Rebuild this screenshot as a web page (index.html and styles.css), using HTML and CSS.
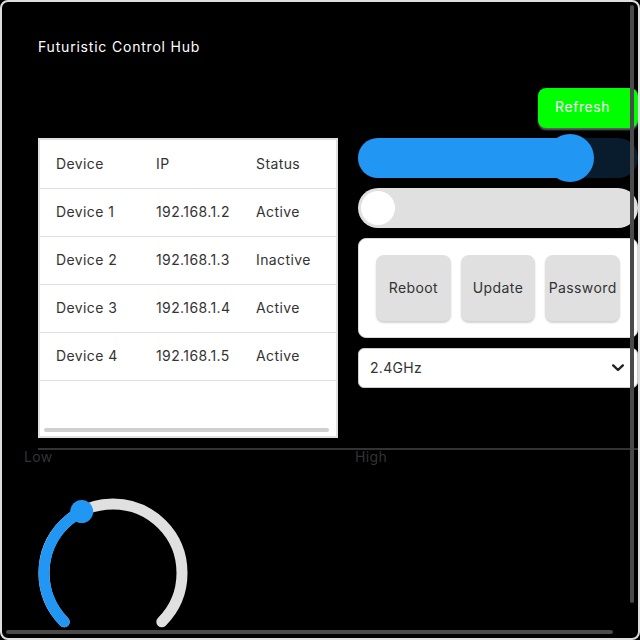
FILE: index.html
```html
<!DOCTYPE html>
<html>
<head>
<meta charset="utf-8">
<link rel="stylesheet" href="styles.css">
</head>
<body>
<div class="hub">
  <h1 class="title">Futuristic Control Hub</h1>
  <div class="toolbar">
    <button class="refresh">Refresh</button>
  </div>
  <div class="main">
    <div class="table-wrap">
      <table class="devices">
        <thead>
          <tr><th>Device</th><th>IP</th><th>Status</th></tr>
        </thead>
        <tbody>
          <tr><td>Device 1</td><td>192.168.1.2</td><td>Active</td></tr>
          <tr><td>Device 2</td><td>192.168.1.3</td><td>Inactive</td></tr>
          <tr><td>Device 3</td><td>192.168.1.4</td><td>Active</td></tr>
          <tr><td>Device 4</td><td>192.168.1.5</td><td>Active</td></tr>
        </tbody>
      </table>
      <div class="table-thumb"></div>
    </div>
    <div class="controls">
      <div class="slider">
        <div class="slider-fill" style="width:212px"></div>
        <div class="slider-thumb"></div>
      </div>
      <div class="toggle">
        <div class="toggle-knob"></div>
      </div>
      <div class="actions">
        <button class="action">Reboot</button>
        <button class="action">Update</button>
        <button class="action">Password</button>
      </div>
      <div class="select">
        <span>2.4GHz</span>
        <svg class="chevron" width="12" height="8" viewBox="0 0 12 8"><path d="M1.2 1.4 L6 6 L10.8 1.4" fill="none" stroke="#222" stroke-width="2.4" stroke-linecap="round" stroke-linejoin="round"/></svg>
      </div>
    </div>
  </div>
  <div class="range">
    <div class="range-line"></div>
    <div class="range-labels"><span>Low</span><span>High</span></div>
  </div>
  <svg class="knob" width="150" height="150" viewBox="0 0 150 150">
    <path d="M26.2 123.8 A69 69 0 1 1 123.8 123.8" fill="none" stroke="#e0e0e0" stroke-width="11" stroke-linecap="round"/>
    <path d="M26.2 123.8 A69 69 0 0 1 43.7 13.5" fill="none" stroke="#2196f3" stroke-width="11" stroke-linecap="round"/>
    <circle cx="43.7" cy="13.5" r="11.5" fill="#2196f3"/>
  </svg>
  <div class="vscroll"></div>
  <div class="hscroll"></div>
</div>
</body>
</html>
```
FILE: styles.css
```css
* { box-sizing: border-box; }
html, body { margin: 0; padding: 0; background: #000; }
body { font-family: Inter, "Noto Sans", sans-serif; font-size: 14px; }
.hub {
  position: relative;
  width: 640px;
  height: 640px;
  border: 2px solid #dedede;
  border-radius: 8px;
  background: #000;
  overflow: hidden;
  padding: 36px 0 0 36px;
}
.title {
  margin: 0;
  font-size: 14px;
  font-weight: 400;
  line-height: 17px;
  color: #fff;
  letter-spacing: 0.8px;
}
.toolbar {
  width: 600px;
  display: flex;
  justify-content: flex-end;
  margin-top: 33px;
}
.refresh {
  width: 100px;
  height: 40px;
  border: none;
  border-radius: 8px;
  background: #00ff00;
  color: #fff;
  font: inherit;
  letter-spacing: 0.6px;
  text-align: left;
  padding: 0 0 4px 17px;
  box-shadow: 0 2px 2px rgba(140, 140, 140, 0.7);
}
.main {
  display: grid;
  grid-template-columns: 300px 280px;
  gap: 20px;
  margin-top: 10px;
}
.table-wrap {
  position: relative;
  height: 300px;
  border: 2px solid #e0e0e0;
  background: #fff;
  overflow: hidden;
}
.devices {
  border-collapse: collapse;
  width: 307px;
  table-layout: fixed;
  color: #333;
}
.devices th, .devices td {
  text-align: left;
  font-weight: 400;
  height: 48px;
  padding: 0 0 1px 16px;
  border-bottom: 1px solid #e0e0e0;
  letter-spacing: 0.4px;
  white-space: nowrap;
}
.devices th:nth-child(1), .devices td:nth-child(1) { width: 100px; }
.devices th:nth-child(2), .devices td:nth-child(2) { width: 100px; }
.table-thumb {
  position: absolute;
  left: 4px;
  top: 288px;
  width: 285px;
  height: 4px;
  border-radius: 2px;
  background: #cfcfcf;
}
.controls {
  display: flex;
  flex-direction: column;
  gap: 10px;
}
.slider {
  height: 40px;
  border-radius: 20px;
  background: #081c2e;
  display: flex;
  align-items: center;
}
.slider-fill {
  height: 40px;
  background: #2196f3;
  border-radius: 20px 0 0 20px;
}
.slider-thumb {
  width: 48px;
  height: 48px;
  margin-left: -24px;
  border-radius: 50%;
  background: #2196f3;
  flex: none;
}
.toggle {
  height: 40px;
  border-radius: 20px;
  background: #e0e0e0;
  display: flex;
  align-items: center;
  padding-left: 3px;
}
.toggle-knob {
  width: 34px;
  height: 34px;
  border-radius: 50%;
  background: #fff;
}
.actions {
  height: 100px;
  background: #fff;
  border: 1px solid #d8d8d8;
  border-radius: 8px;
  display: flex;
  align-items: center;
  gap: 10px;
  padding: 0 17px;
}
.action {
  flex: 1;
  height: 66px;
  padding: 0 0 2px;
  border: none;
  border-radius: 8px;
  background: #e0e0e0;
  color: #333;
  font: inherit;
  letter-spacing: 0.4px;
  box-shadow: 0 2px 2px rgba(0, 0, 0, 0.18);
}
.select {
  height: 40px;
  background: #fff;
  border: 1px solid #ccc;
  border-radius: 6px;
  display: flex;
  align-items: center;
  justify-content: space-between;
  padding: 0 13px 1px 11px;
  color: #333;
  letter-spacing: 0.3px;
}
.range {
  margin-top: 10px;
}
.range-line {
  width: 620px;
  height: 2px;
  background: #333;
}
.range-labels {
  display: grid;
  grid-template-columns: 331px auto;
  margin: -2px 0 0 -14px;
  color: #333;
  line-height: 17px;
  letter-spacing: 0.4px;
}
.knob {
  display: block;
  margin-top: 33px;
}
.vscroll {
  position: absolute;
  left: 628px;
  top: 3px;
  width: 4px;
  height: 598px;
  border-radius: 2px;
  background: #4a4a4a;
}
.hscroll {
  position: absolute;
  left: 4px;
  top: 628px;
  width: 607px;
  height: 4px;
  border-radius: 2px;
  background: #4a4a4a;
}
```
